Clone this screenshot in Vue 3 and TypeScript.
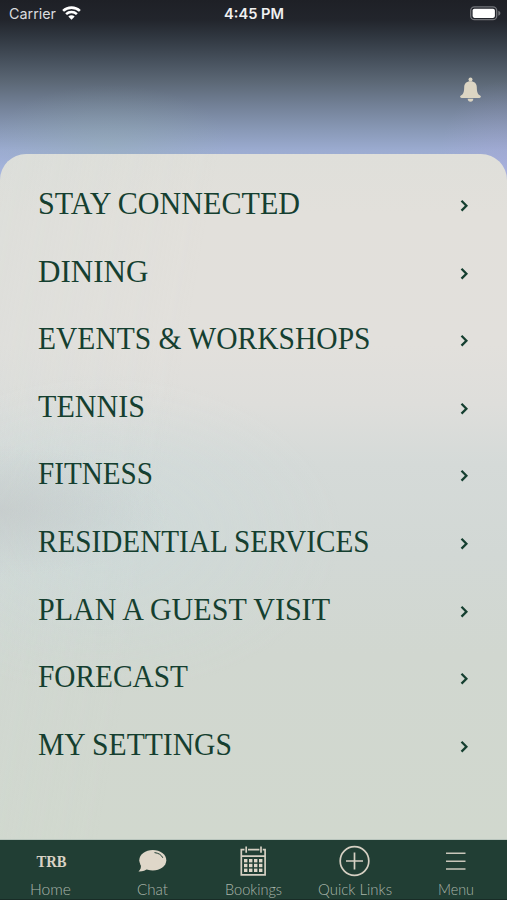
<script setup lang="ts">
interface MenuItem {
  label: string
  width: number
}

interface Tab {
  id: string
  label: string
  width: number
}

const items: MenuItem[] = [
  { label: 'STAY CONNECTED', width: 262 },
  { label: 'DINING', width: 110.5 },
  { label: 'EVENTS & WORKSHOPS', width: 332.5 },
  { label: 'TENNIS', width: 107 },
  { label: 'FITNESS', width: 115 },
  { label: 'RESIDENTIAL SERVICES', width: 331.5 },
  { label: 'PLAN A GUEST VISIT', width: 292 },
  { label: 'FORECAST', width: 150 },
  { label: 'MY SETTINGS', width: 194 },
]

const tabs: Tab[] = [
  { id: 'home', label: 'Home', width: 41 },
  { id: 'chat', label: 'Chat', width: 31 },
  { id: 'bookings', label: 'Bookings', width: 57 },
  { id: 'links', label: 'Quick Links', width: 74 },
  { id: 'menu', label: 'Menu', width: 36 },
]

const dots: number[] = [0, 1, 2, 3]
const dotRows: number[] = [0, 1, 2]
</script>

<template>
  <div class="screen">
    <header class="top">
      <div class="status">
        <div class="carrier">
          <svg class="carrier-text" width="47" height="20">
            <text x="0" y="18.5" textLength="47" lengthAdjust="spacingAndGlyphs">Carrier</text>
          </svg>
          <svg class="wifi" width="19" height="14" viewBox="0 0 19 14">
            <path d="M1.1 4.9C5.8.5 13.2.5 17.9 4.9" />
            <path d="M4.1 8.1c3-2.8 7.8-2.8 10.8 0" />
            <path class="fill" d="M9.5 13.8 6.3 10.5c1.8-1.6 4.6-1.6 6.4 0z" />
          </svg>
        </div>
        <svg class="clock" width="60" height="20">
          <text x="0" y="18.5" textLength="60" lengthAdjust="spacingAndGlyphs">4:45 PM</text>
        </svg>
        <svg class="battery" width="31" height="15" viewBox="0 0 31 15">
          <rect class="shell" x=".7" y=".9" width="26" height="12.8" rx="3.8" />
          <rect class="charge" x="2.6" y="2.7" width="22.3" height="9.2" rx="1.8" />
          <path class="tip" d="M28.300 4.800c2.800 1.200 2.800 3.800 0 5z" />
        </svg>
      </div>
      <svg class="bell" width="21" height="26" viewBox="0 0 21 26">
        <circle cx="10.5" cy="2.400" r="2" />
        <path d="M10.5 4.300C6.500 4.300 4.300 6.500 4.200 10.200c-.1 5.200-.9 7-3.300 8.400-1.400.9-.9 2.300.7 2.300h17.800c1.600 0 2.100-1.400.7-2.300-2.400-1.400-3.200-3.200-3.300-8.400C16.700 6.500 14.500 4.300 10.500 4.300z" />
        <path d="M7.700 21.800h5.600c0 1.800-1.200 3-2.800 3s-2.800-1.200-2.800-3z" />
      </svg>
    </header>

    <main class="sheet">
      <nav class="list">
        <a v-for="item in items" :key="item.label" class="row">
          <svg class="label" :width="item.width + 2" height="40">
            <text x="0" y="30.5" :textLength="item.width" lengthAdjust="spacingAndGlyphs">{{ item.label }}</text>
          </svg>
          <svg class="chevron" width="10" height="14" viewBox="0 0 10 14">
            <path d="M1.500 1.800l4.900 4.900-4.900 4.900" />
          </svg>
        </a>
      </nav>
    </main>

    <footer class="tabs">
      <a v-for="tab in tabs" :key="tab.id" class="tab">
        <svg v-if="tab.id === 'home'" class="icon" width="34" height="34">
          <text class="brand" x="2.500" y="22.700" textLength="30" lengthAdjust="spacingAndGlyphs">TRB</text>
        </svg>
        <svg v-else-if="tab.id === 'chat'" class="icon" width="34" height="34" viewBox="0 0 34 34">
          <ellipse class="solid" cx="17.8" cy="16.3" rx="13.500" ry="10.300" />
          <path class="solid" d="M5.700 20.500c.7 3.200-.2 5-2.200 6.900 3.900.2 7-.8 9.300-3z" />
          <path class="shine" d="M19.500 8.600c4 .4 7 2.300 8.300 5.200" />
        </svg>
        <svg v-else-if="tab.id === 'bookings'" class="icon" width="34" height="34" viewBox="0 0 34 34">
          <path class="line" d="M8.500 5.700H5.300v25.100h23.800V5.700h-2.400M12 5.700h11.400M5.300 12.200h23.800" />
          <path class="line" d="M10.200 2.500v6.300M25 2.500v6.300" />
          <template v-for="r in dotRows" :key="r">
            <rect v-for="c in dots" :key="c" class="solid" :x="8 + c * 5" :y="15 + r * 4.8" width="3.4" height="3.4" />
          </template>
        </svg>
        <svg v-else-if="tab.id === 'links'" class="icon" width="34" height="34" viewBox="0 0 34 34">
          <circle class="line" cx="16.5" cy="17" r="14.3" />
          <path class="line" d="M16.5 8.500v17M8 17h17" />
        </svg>
        <svg v-else class="icon" width="34" height="34" viewBox="0 0 34 34">
          <path class="bars" d="M7 9.300h19.500M7 17.200h19.500M7 25.100h19.500" />
        </svg>
        <svg class="caption" :width="tab.width + 2" height="22">
          <text x="1" y="17.3" :textLength="tab.width" lengthAdjust="spacingAndGlyphs">{{ tab.label }}</text>
        </svg>
      </a>
    </footer>
  </div>
</template>

<style>
body {
  margin: 0;
  background: #213e34;
}
</style>

<style scoped>
.screen {
  width: 507px;
  height: 900px;
  display: flex;
  flex-direction: column;
  overflow: hidden;
  background:
    radial-gradient(ellipse 70px 90px at 507px 170px, rgba(175, 165, 220, 0.28), transparent),
    radial-gradient(ellipse 120px 60px at 110px 145px, rgba(150, 180, 170, 0.3), transparent),
    linear-gradient(180deg, #1e2026 0, #22252c 20px, #2f363f 36px, #46505c 60px, #5c6876 82px, #728096 105px, #8797b4 128px, #9babd0 150px, #a9b8e2 180px);
}
svg {
  display: block;
  flex: none;
  overflow: visible;
}
.top {
  height: 153.5px;
  flex: none;
  display: flex;
  flex-direction: column;
}
.status {
  height: 28px;
  padding: 0 6px 0 9px;
  display: grid;
  grid-template-columns: 1fr 60px 1fr;
  align-items: start;
  font-family: Inter, sans-serif;
  font-size: 14.5px;
  fill: #f0f0f1;
}
.carrier {
  display: flex;
  gap: 6px;
}
.carrier-text {
  fill: #dadcdf;
}
.clock {
  font-weight: 600;
  margin-left: -1px;
}
.wifi {
  margin-top: 6px;
  fill: none;
  stroke: #ffffff;
  stroke-width: 2.6;
}
.wifi .fill {
  fill: #ffffff;
  stroke: none;
}
.battery {
  justify-self: end;
  margin-top: 6px;
}
.shell {
  fill: none;
  stroke: #73757a;
  stroke-width: 1.3;
}
.charge {
  fill: #ffffff;
}
.tip {
  fill: #73757a;
}
.bell {
  margin: 49px 26px 0 auto;
  fill: #dcd5c3;
}
.sheet {
  flex: 1;
  border-radius: 26px 26px 0 0;
  padding: 15.5px 37px 0 38px;
  background:
    radial-gradient(ellipse 170px 65px at 0 357px, rgba(190, 194, 195, 0.5), transparent),
    radial-gradient(ellipse 240px 160px at 20% 380px, rgba(200, 220, 222, 0.35), transparent),
    linear-gradient(100deg, rgba(205, 218, 216, 0.2), transparent 35%),
    linear-gradient(180deg, #dfdfda 0, #e2e0db 60px, #e2e0dc 190px, #dededb 250px, #d5dad8 310px, #d2d8d5 400px, #d1d7d0 500px, #d1d8ce 686px);
}
.list {
  display: flex;
  flex-direction: column;
}
.row {
  height: 67.6px;
  display: flex;
  justify-content: space-between;
  align-items: flex-start;
}
.label {
  margin-top: 14px;
  font-family: "Liberation Serif", serif;
  font-size: 31px;
  fill: #153f30;
}
.chevron {
  margin-top: 30px;
  fill: none;
  stroke: #153f30;
  stroke-width: 2.3;
}
.tabs {
  height: 60px;
  flex: none;
  display: grid;
  grid-template-columns: repeat(5, 1fr);
  background: #213e34;
  box-shadow: 0 -1px 0 #b9c5bd, inset 0 -1px 0 #182c26;
}
.tab {
  display: flex;
  flex-direction: column;
  align-items: center;
  padding-top: 4px;
}
.icon {
  fill: #d9d2c4;
}
.brand {
  font-family: "Liberation Serif", serif;
  font-size: 16px;
  font-weight: 700;
}
.solid {
  fill: #dfd7c9;
}
.shine {
  fill: none;
  stroke: #213e34;
  stroke-width: 1;
}
.line {
  fill: none;
  stroke: #d6d0c3;
  stroke-width: 1.7;
}
.bars {
  fill: none;
  stroke: #c9c6ba;
  stroke-width: 1.5;
}
.caption {
  font-family: Lato, sans-serif;
  font-size: 16px;
  font-weight: 300;
  fill: #a9b5aa;
}
</style>
